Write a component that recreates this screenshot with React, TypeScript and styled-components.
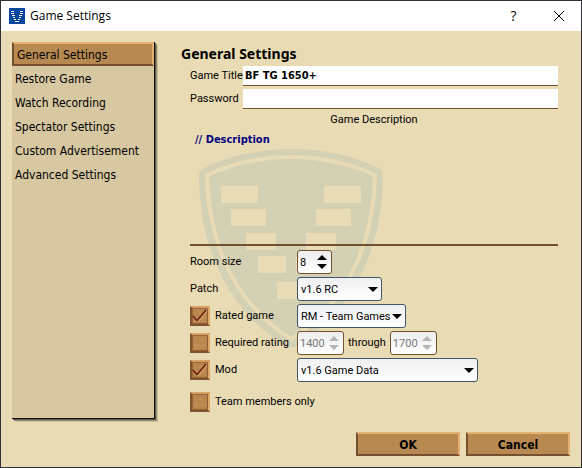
import React from "react";
import styled, { createGlobalStyle, css } from "styled-components";

const PARCHMENT = "#e9dbb4";
const WOOD = "#b88a52";
const WOOD_LIGHT = "#e5b173";
const WOOD_DARK = "#75502f";
const UI_FONT = '"DejaVu Sans Condensed", "DejaVu Sans", sans-serif';
const LABEL_FONT = 'Roboto, "Noto Sans", sans-serif';
const HEADING_FONT = '"Noto Sans", "Open Sans", sans-serif';

const GlobalStyle = createGlobalStyle`
  *, *::before, *::after { box-sizing: border-box; }
  body {
    margin: 0;
    background: #30323a;
    color: #000;
    font: 11px/16px ${LABEL_FONT};
  }
  input, select, button, textarea { font: inherit; color: inherit; margin: 0; }
`;

const Dialog = styled.div`
  min-height: 100vh;
  display: flex;
  flex-direction: column;
  border: 1px solid #30323a;
  background: ${PARCHMENT};
`;

const TitleBar = styled.header`
  display: flex;
  align-items: center;
  height: 30px;
  padding-left: 8px;
  background: #fff;
`;

const WindowTitle = styled.h1`
  flex: 1;
  margin: 0 0 0 5px;
  font: 12px/16px "Open Sans", "Noto Sans", sans-serif;
`;

const WindowButton = styled.button`
  display: grid;
  place-items: center;
  width: 45px;
  height: 28px;
  padding: 0;
  border: 0;
  background: transparent;
  font: 14px/16px "Open Sans", sans-serif;
`;

const Main = styled.div`
  flex: 1;
  display: flex;
  gap: 25px;
  padding: 11px 23px 0 11px;
`;

const Sidebar = styled.nav`
  flex: 0 0 143px;
  height: 377px;
  display: flex;
  flex-direction: column;
  background: #d7c8a1;
  border-right: 1px solid #111;
  border-bottom: 1px solid #111;
  box-shadow: 1px 1px 0 #5d5746, 2px 2px 0 #998f74, 3px 3px 0 #c8bc9a;
`;

const SidebarItem = styled.button<{ $active?: boolean }>`
  height: 24px;
  padding: 2px 3px 0;
  border: 0;
  background: transparent;
  text-align: left;
  white-space: nowrap;
  font: 12px/16px ${UI_FONT};
  ${({ $active }) =>
    $active &&
    css`
      border: 2px solid;
      border-color: ${WOOD_LIGHT} ${WOOD_LIGHT} ${WOOD_DARK} ${WOOD_DARK};
      background: ${WOOD};
    `}
`;

const Panel = styled.main`
  flex: 1;
  min-width: 0;
  position: relative;
  isolation: isolate;
  display: flex;
  flex-direction: column;
  padding-left: 10px;
`;

const Watermark = styled.svg`
  position: absolute;
  z-index: -1;
  left: 19px;
  top: 107px;
  width: 184px;
  height: 200px;
`;

const PanelTitle = styled.h2`
  margin: 0 0 0 -9px;
  font: bold 14px/24px ${HEADING_FONT};
`;

const Field = styled.div`
  display: grid;
  grid-template-columns: 53px 1fr;
  align-items: center;
  margin-bottom: 3px;
  white-space: nowrap;
`;

const TextBox = styled.input`
  width: 100%;
  height: 20px;
  padding: 0 2px;
  border: 0;
  border-bottom: 1px solid ${WOOD_DARK};
  border-radius: 0;
  background: #fff;
  outline: 0;
  font: bold 11px/16px ${UI_FONT};
`;

const DescriptionLabel = styled.label`
  align-self: center;
  height: 17px;
`;

const Description = styled.textarea`
  height: 117px;
  padding: 3px 5px;
  border: 0;
  border-bottom: 2px solid ${WOOD_DARK};
  background: transparent;
  outline: 0;
  resize: none;
  color: #000080;
  font: bold 11px/16px ${UI_FONT};
`;

const Options = styled.div`
  display: flex;
  flex-direction: column;
  gap: 3px;
  padding-top: 4px;
`;

const OptionRow = styled.div<{ $spaced?: boolean }>`
  display: grid;
  grid-template-columns: 107px 1fr;
  align-items: center;
  min-height: 24px;
  margin-top: ${({ $spaced }) => ($spaced ? "5px" : "0")};
  white-space: nowrap;
`;

const OptionLabel = styled.label`
  display: flex;
  align-items: center;
  gap: 5px;
`;

const Controls = styled.div`
  display: flex;
  align-items: center;
  gap: 4px;
`;

const CheckBox = styled.input`
  appearance: none;
  flex: none;
  width: 20px;
  height: 20px;
  border: 2px solid;
  border-color: #d9a064 #dfa768 #80532e #80532e;
  background: #b9874d;
  box-shadow: inset 1px 1px 0 #98633a, inset -1px -1px 0 #8f5c35;
`;

const CheckFace = styled.span`
  display: grid;
  > * {
    grid-area: 1 / 1;
  }
  > svg {
    z-index: 1;
    pointer-events: none;
  }
`;

const SelectFrame = styled.span<{ $wide: number }>`
  display: grid;
  align-items: center;
  width: ${({ $wide }) => $wide}px;
  > * {
    grid-area: 1 / 1;
  }
  > svg {
    justify-self: end;
    margin-right: 4px;
    pointer-events: none;
  }
`;

const SelectBox = styled.select`
  appearance: none;
  width: 100%;
  height: 24px;
  padding: 1px 14px 0 3px;
  border: 1px solid #405668;
  border-radius: 3px;
  background: linear-gradient(#f0f0f0, #fff);
`;

const SpinFrame = styled.span<{ $wide: number; $disabled?: boolean }>`
  display: flex;
  width: ${({ $wide }) => $wide}px;
  height: 24px;
  padding: 0 4px 0 2px;
  border: 1px solid ${WOOD_DARK};
  border-radius: 3px;
  background: linear-gradient(#ededed, #fff);
  color: ${({ $disabled }) => ($disabled ? "#787878" : "#000")};
`;

const SpinInput = styled.input`
  appearance: textfield;
  flex: 1;
  min-width: 0;
  padding: 2px 0 0;
  border: 0;
  outline: 0;
  background: transparent;
  &::-webkit-inner-spin-button {
    appearance: none;
    margin: 0;
  }
`;

const SpinButtons = styled.span<{ $disabled?: boolean }>`
  display: flex;
  flex-direction: column;
  justify-content: center;
  gap: 4px;
  color: ${({ $disabled }) => ($disabled ? "#b5b5b5" : "#000")};
`;

const SpinButton = styled.button`
  display: block;
  padding: 0;
  border: 0;
  background: transparent;
  color: inherit;
  > svg {
    display: block;
  }
`;

const Footer = styled.footer`
  display: flex;
  justify-content: flex-end;
  gap: 6px;
  padding: 0 11px 11px;
`;

const WoodButton = styled.button`
  width: 104px;
  height: 24px;
  padding: 1px 0 0;
  border: 2px solid;
  border-color: ${WOOD_LIGHT} ${WOOD_LIGHT} ${WOOD_DARK} ${WOOD_DARK};
  background: ${WOOD};
  font: bold 12px/16px ${UI_FONT};
`;

const AppLogo = () => (
  <svg width="16" height="16" viewBox="0 0 16 16" shapeRendering="crispEdges" aria-hidden="true">
    <rect width="16" height="16" fill="#0747a0" />
    <path
      d="M2 3h3M11 3h3M2 5h3M11 5h3M3 7h3M10 7h3M4 9h2M10 9h2M5 11h2M9 11h2M6 13h4"
      transform="translate(0 .5)"
      stroke="#fff"
    />
  </svg>
);

const Arrow = ({ up = false }: { up?: boolean }) => (
  <svg width="10" height="5" viewBox="0 0 10 5" aria-hidden="true">
    <path d={up ? "M0 5L5 0L10 5Z" : "M0 0L5 5L10 0Z"} fill="currentColor" />
  </svg>
);

const bricks = [
  [22, 37, 37], [125, 37, 37],
  [32, 60, 35], [117, 60, 35],
  [47, 84, 30], [107, 84, 30],
  [59, 107, 28], [97, 107, 28],
  [78, 133, 28],
];

const Shield = () => (
  <Watermark viewBox="0 0 184 200" aria-hidden="true">
    <path
      d="M3 20Q42 0 92 0T181 20Q184 22 184 27C183 104 152 164 97 197Q92 201 87 197C32 164 1 104 0 27Q0 22 3 20Z"
      fill="#d4d0b4"
    />
    <path
      d="M8 26Q48 8 92 8T176 26C174 100 145 157 92 190C39 157 10 100 8 26Z"
      fill="none"
      stroke="#e8dbb6"
      strokeWidth="4"
    />
    {bricks.map(([x, y, w]) => (
      <rect key={`${x}-${y}`} x={x} y={y} width={w} height="17" fill="#e8dbb6" />
    ))}
  </Watermark>
);

const Check = ({ id, checked }: { id: string; checked?: boolean }) => {
  const [on, setOn] = React.useState(Boolean(checked));
  return (
    <CheckFace>
      <CheckBox id={id} type="checkbox" checked={on} onChange={(e) => setOn(e.target.checked)} />
      <svg width="20" height="20" viewBox="0 0 20 20" aria-hidden="true">
        <path d="M4 12h4v1h5v-1h3M9 7h4M5 15h3" fill="none" stroke="#c8965c" />
        {on && (
          <>
            <path d="M4 11L8 16L17 5" fill="none" stroke="#dba66e" />
            <path d="M3 10L7 14.500L16 4" fill="none" stroke="#6f2010" strokeWidth="1.500" />
          </>
        )}
      </svg>
    </CheckFace>
  );
};

const Select = ({ id, value, wide, label }: { id: string; value: string; wide: number; label?: string }) => (
  <SelectFrame $wide={wide}>
    <SelectBox id={id} aria-label={label}>
      <option>{value}</option>
    </SelectBox>
    <Arrow />
  </SelectFrame>
);

const Spinner = ({ id, value, wide, disabled, label }: {
  id: string; value: number; wide: number; disabled?: boolean; label?: string;
}) => {
  const [n, setN] = React.useState(value);
  return (
    <SpinFrame $wide={wide} $disabled={disabled}>
      <SpinInput
        id={id}
        type="number"
        value={n}
        disabled={disabled}
        aria-label={label}
        onChange={(e) => setN(Number(e.target.value))}
      />
      <SpinButtons $disabled={disabled}>
        <SpinButton disabled={disabled} aria-label="Increase" onClick={() => setN(n + 1)}><Arrow up /></SpinButton>
        <SpinButton disabled={disabled} aria-label="Decrease" onClick={() => setN(n - 1)}><Arrow /></SpinButton>
      </SpinButtons>
    </SpinFrame>
  );
};

const sections = [
  "General Settings",
  "Restore Game",
  "Watch Recording",
  "Spectator Settings",
  "Custom Advertisement",
  "Advanced Settings",
];

export default function App() {
  const [section, setSection] = React.useState(sections[0]);
  return (
    <>
      <GlobalStyle />
      <Dialog>
        <TitleBar>
          <AppLogo />
          <WindowTitle>Game Settings</WindowTitle>
          <WindowButton aria-label="Help">?</WindowButton>
          <WindowButton aria-label="Close">
            <svg width="10" height="10" viewBox="0 0 10 10" aria-hidden="true">
              <path d="M0 0L10 10M10 0L0 10" stroke="#000" />
            </svg>
          </WindowButton>
        </TitleBar>
        <Main>
          <Sidebar>
            {sections.map((name) => (
              <SidebarItem key={name} $active={name === section} onClick={() => setSection(name)}>
                {name}
              </SidebarItem>
            ))}
          </Sidebar>
          <Panel>
            <Shield />
            <PanelTitle>General Settings</PanelTitle>
            <Field>
              <label htmlFor="title">Game Title</label>
              <TextBox id="title" defaultValue="BF TG 1650+" />
            </Field>
            <Field>
              <label htmlFor="password">Password</label>
              <TextBox id="password" type="password" />
            </Field>
            <DescriptionLabel htmlFor="description">Game Description</DescriptionLabel>
            <Description id="description" defaultValue="// Description" spellCheck={false} />
            <Options>
              <OptionRow>
                <OptionLabel htmlFor="room">Room size</OptionLabel>
                <Controls><Spinner id="room" value={8} wide={35} /></Controls>
              </OptionRow>
              <OptionRow>
                <OptionLabel htmlFor="patch">Patch</OptionLabel>
                <Controls><Select id="patch" value="v1.6 RC" wide={85} /></Controls>
              </OptionRow>
              <OptionRow>
                <OptionLabel htmlFor="rated"><Check id="rated" checked />Rated game</OptionLabel>
                <Controls><Select id="ladder" value="RM - Team Games" wide={109} label="Ladder" /></Controls>
              </OptionRow>
              <OptionRow>
                <OptionLabel htmlFor="required"><Check id="required" />Required rating</OptionLabel>
                <Controls>
                  <Spinner id="min" value={1400} wide={47} disabled label="Minimum rating" />
                  <span>through</span>
                  <Spinner id="max" value={1700} wide={47} disabled label="Maximum rating" />
                </Controls>
              </OptionRow>
              <OptionRow>
                <OptionLabel htmlFor="mod"><Check id="mod" checked />Mod</OptionLabel>
                <Controls><Select id="data" value="v1.6 Game Data" wide={181} label="Mod data set" /></Controls>
              </OptionRow>
              <OptionRow $spaced>
                <OptionLabel htmlFor="team"><Check id="team" />Team members only</OptionLabel>
              </OptionRow>
            </Options>
          </Panel>
        </Main>
        <Footer>
          <WoodButton>OK</WoodButton>
          <WoodButton>Cancel</WoodButton>
        </Footer>
      </Dialog>
    </>
  );
}
